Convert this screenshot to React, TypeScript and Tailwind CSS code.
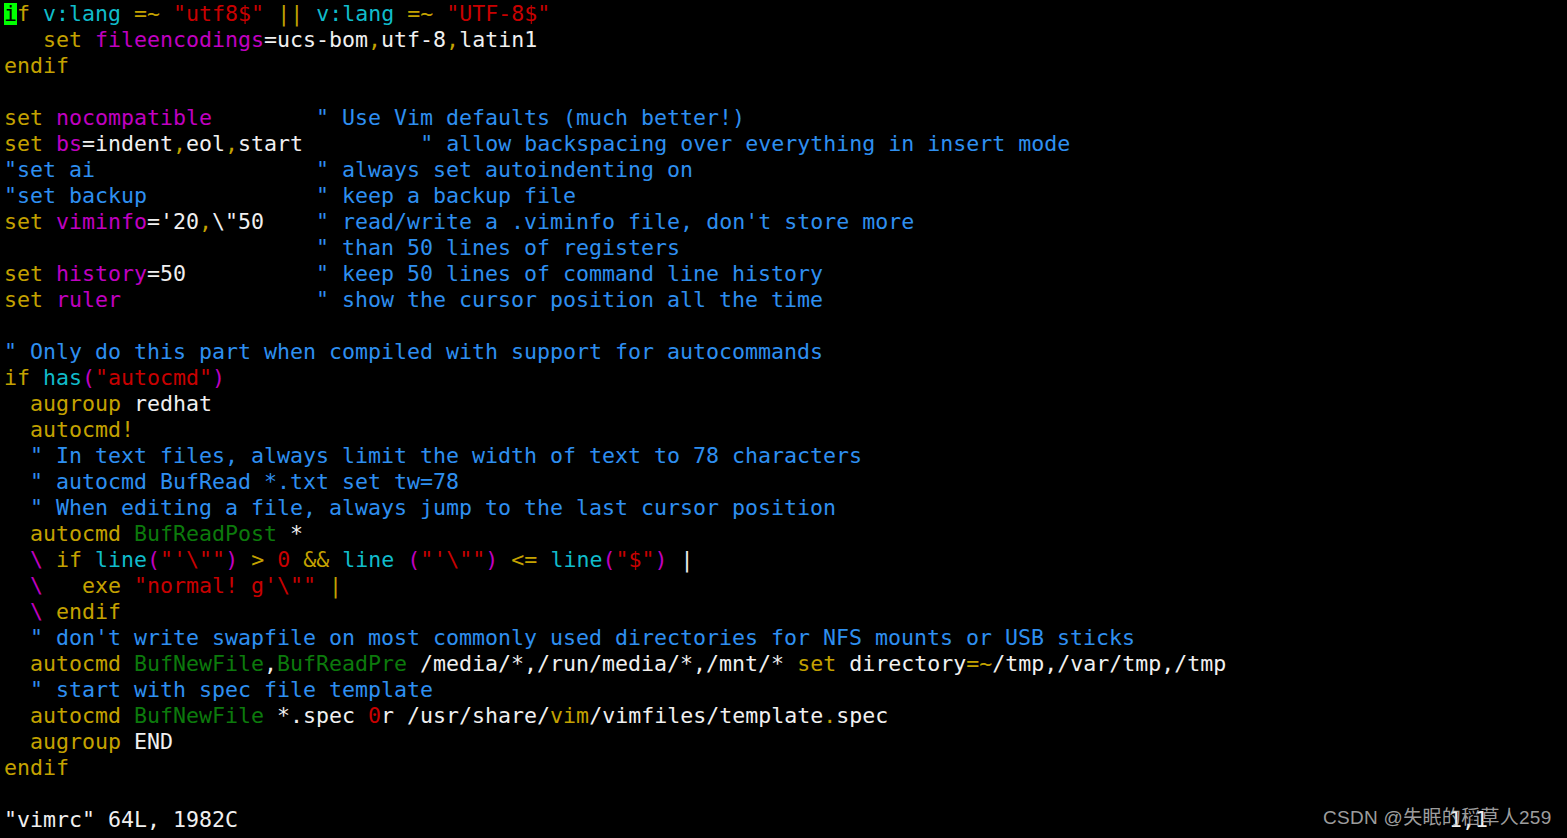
import React from "react";

type Seg = [string, string];

const Y = "text-[#c4a200]";
const Cc = "text-[#10bccb]";
const R = "text-[#c80000]";
const M = "text-[#c000c0]";
const B = "text-[#2e8ff0]";
const W = "text-[#f0f0f0]";
const G = "text-[#0c7a0c]";

const lines: Seg[][] = [
  [[Y, "f"], [W, " "], [Cc, "v:lang"], [W, " "], [Y, "=~"], [W, " "], [R, '"utf8$"'], [W, " "], [Y, "||"], [W, " "], [Cc, "v:lang"], [W, " "], [Y, "=~"], [W, " "], [R, '"UTF-8$"']],
  [[W, "   "], [Y, "set"], [W, " "], [M, "fileencodings"], [W, "=ucs-bom"], [Y, ","], [W, "utf-8"], [Y, ","], [W, "latin1"]],
  [[Y, "endif"]],
  [],
  [[Y, "set"], [W, " "], [M, "nocompatible"], [W, "        "], [B, '" Use Vim defaults (much better!)']],
  [[Y, "set"], [W, " "], [M, "bs"], [W, "=indent"], [Y, ","], [W, "eol"], [Y, ","], [W, "start"], [W, "         "], [B, '" allow backspacing over everything in insert mode']],
  [[B, '"set ai                 " always set autoindenting on']],
  [[B, '"set backup             " keep a backup file']],
  [[Y, "set"], [W, " "], [M, "viminfo"], [W, "='20"], [Y, ","], [W, '\\"50'], [W, "    "], [B, "\" read/write a .viminfo file, don't store more"]],
  [[B, '                        " than 50 lines of registers']],
  [[Y, "set"], [W, " "], [M, "history"], [W, "=50"], [W, "          "], [B, '" keep 50 lines of command line history']],
  [[Y, "set"], [W, " "], [M, "ruler"], [W, "               "], [B, '" show the cursor position all the time']],
  [],
  [[B, '" Only do this part when compiled with support for autocommands']],
  [[Y, "if"], [W, " "], [Cc, "has"], [M, "("], [R, '"autocmd"'], [M, ")"]],
  [[W, "  "], [Y, "augroup"], [W, " redhat"]],
  [[W, "  "], [Y, "autocmd!"]],
  [[W, "  "], [B, '" In text files, always limit the width of text to 78 characters']],
  [[W, "  "], [B, '" autocmd BufRead *.txt set tw=78']],
  [[W, "  "], [B, '" When editing a file, always jump to the last cursor position']],
  [[W, "  "], [Y, "autocmd"], [W, " "], [G, "BufReadPost"], [W, " *"]],
  [[W, "  "], [M, "\\"], [W, " "], [Y, "if"], [W, " "], [Cc, "line"], [M, "("], [R, '"\'\\""'], [M, ")"], [W, " "], [Y, ">"], [W, " "], [R, "0"], [W, " "], [Y, "&&"], [W, " "], [Cc, "line"], [W, " "], [M, "("], [R, '"\'\\""'], [M, ")"], [W, " "], [Y, "<="], [W, " "], [Cc, "line"], [M, "("], [R, '"$"'], [M, ")"], [W, " |"]],
  [[W, "  "], [M, "\\"], [W, "   "], [Y, "exe"], [W, " "], [R, '"normal! g\'\\""'], [W, " "], [Y, "|"]],
  [[W, "  "], [M, "\\"], [W, " "], [Y, "endif"]],
  [[W, "  "], [B, "\" don't write swapfile on most commonly used directories for NFS mounts or USB sticks"]],
  [[W, "  "], [Y, "autocmd"], [W, " "], [G, "BufNewFile"], [W, ","], [G, "BufReadPre"], [W, " /media/*,/run/media/*,/mnt/* "], [Y, "set"], [W, " directory"], [Y, "=~"], [W, "/tmp,/var/tmp,/tmp"]],
  [[W, "  "], [B, '" start with spec file template']],
  [[W, "  "], [Y, "autocmd"], [W, " "], [G, "BufNewFile"], [W, " *.spec "], [R, "0"], [W, "r /usr/share/"], [Y, "vim"], [W, "/vimfiles/template"], [Y, "."], [W, "spec"]],
  [[W, "  "], [Y, "augroup"], [W, " END"]],
  [[Y, "endif"]],
  [],
];

export default function App() {
  return (
    <div
      className="relative w-[1567px] h-[838px] bg-black overflow-hidden pl-[4px] pt-px"
      style={{ fontFamily: '"DejaVu Sans Mono", monospace' }}
    >
      <div className="text-[21.6px] leading-[26px] whitespace-pre">
        {lines.map((segs, i) => (
          <div key={i} className="h-[26px]">
            {i === 0 && (
              <span className="inline-block align-top mt-[2px] h-[22px] leading-[22px] bg-[#00ff00] text-black">
                i
              </span>
            )}
            {segs.map(([cls, t], j) => (
              <span key={j} className={cls}>
                {t}
              </span>
            ))}
          </div>
        ))}
        <div className="h-[26px] flex">
          <span className={W}>"vimrc" 64L, 1982C</span>
          <span className={`${W} ml-[1211px]`}>1,1</span>
        </div>
      </div>
      <div
        className="absolute left-[1323px] top-[805px] text-[19px] leading-[26px] text-[rgba(200,200,200,0.8)] whitespace-pre tracking-[0.3px]"
        style={{ fontFamily: '"Liberation Sans", "Noto Sans CJK SC", sans-serif' }}
      >
        CSDN @失眠的稻草人259
      </div>
    </div>
  );
}
